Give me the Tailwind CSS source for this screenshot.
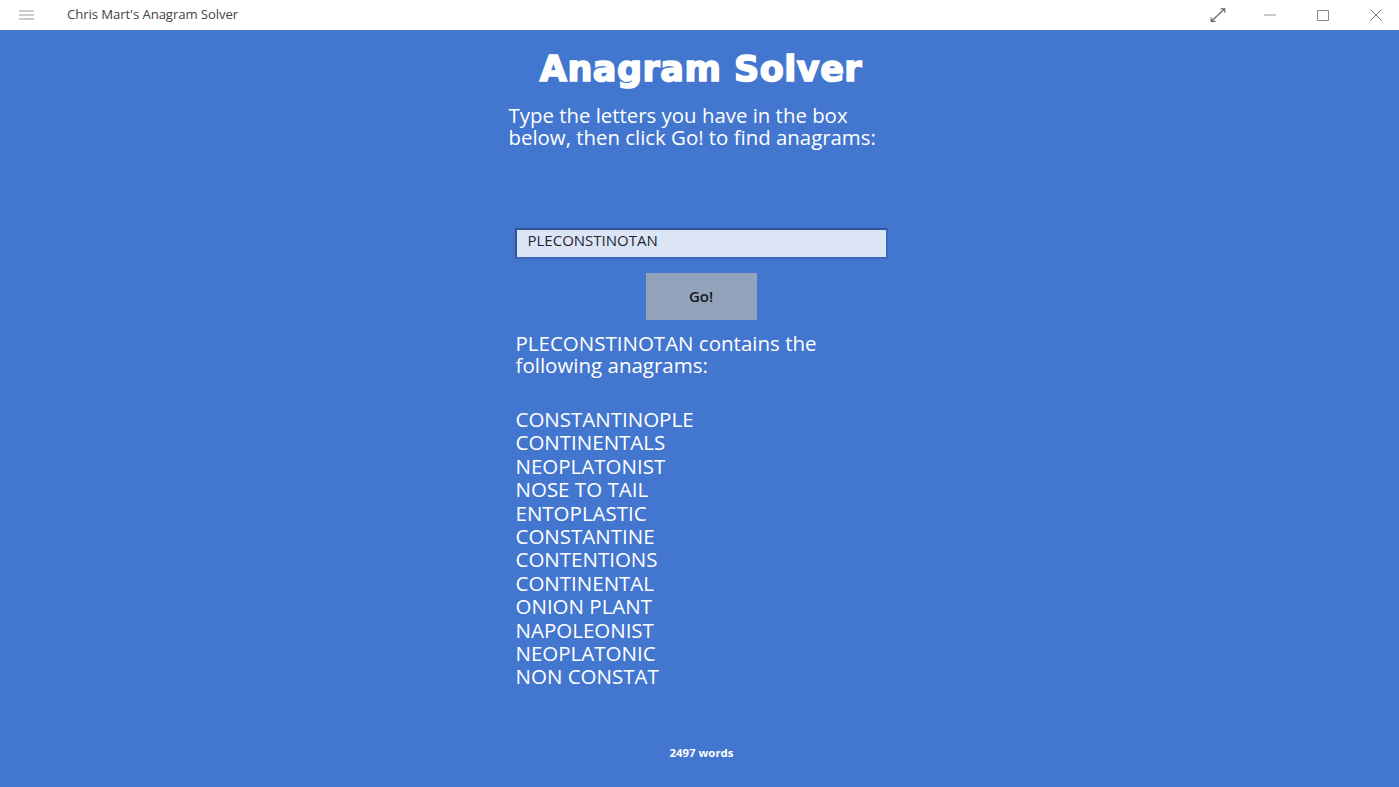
<!DOCTYPE html>
<html lang="en">
<head>
    <meta charset="UTF-8">
    <title>Chris Mart's Anagram Solver</title>
    <script src="https://cdn.jsdelivr.net/npm/@tailwindcss/browser@4"></script>
</head>
<body class="bg-[#4376cf] font-['Open_Sans',sans-serif] overflow-hidden">
    <div class="w-[1399px] h-[787px] flex flex-col">
        <!-- title bar -->
        <div class="h-[30px] bg-white flex items-center shrink-0 text-[#555]">
            <svg class="ml-[19px]" width="15" height="10" viewBox="0 0 15 10" fill="none" stroke="#999" stroke-width="1"><path d="M0 1h15M0 5h15M0 9h15"/></svg>
            <div class="ml-[33px] text-[13.200px] text-[#444] tracking-[-0.1px]">Chris Mart's Anagram Solver</div>
            <div class="ml-auto flex items-center">
                <svg width="16" height="14" viewBox="0 0 16 14" fill="none" stroke="#666" stroke-width="1.200"><path d="M1 13.500 15 .5M10.500 .8h4.300v4M1.200 9.500v3.800h4.300"/></svg>
                <svg class="ml-[38px]" width="12" height="2" viewBox="0 0 12 2" fill="none" stroke="#999" stroke-width="1"><path d="M0 1h12"/></svg>
                <svg class="ml-[41px]" width="12" height="11" viewBox="0 0 12 11" fill="none" stroke="#888" stroke-width="1"><path d="M.5 .5h11v10H.5z"/></svg>
                <svg class="ml-[41px] mr-[17px]" width="12" height="12" viewBox="0 0 12 12" fill="none" stroke="#777" stroke-width="1"><path d="M.5 .5l11 11M11.500 .5l-11 11"/></svg>
            </div>
        </div>

        <!-- content -->
        <div class="flex flex-col items-center text-white relative grow">
            <h1 class="mt-[14px] h-[50px] font-['DejaVu_Sans',sans-serif] font-bold text-[35px] leading-[50px] tracking-[0.5px] ml-[3px] [-webkit-text-stroke:1.6px_white]">Anagram Solver</h1>
            <p class="mt-[10px] w-[372px] ml-[-10px] text-[20.400px] leading-[22px]">Type the letters you have in the box below, then click Go! to find anagrams:</p>
            <div class="mt-[80px] ml-[3px] w-[373px] h-[31px] bg-[#dce5f5] border-2 border-[#2f5597] border-b-[#3a69b8] border-r-[#3a69b8] pl-[11px] text-[15px] leading-[20px] text-[#1f2533]">PLECONSTINOTAN</div>
            <button class="mt-[14px] ml-[3px] w-[111px] h-[47px] bg-[#93a3bc] text-[15px] font-semibold text-[#14171f]">Go!</button>
            <div class="mt-[12px] ml-[2px] w-[370px] text-[20.500px] leading-[22px]">
                <p class="w-[320px]">PLECONSTINOTAN contains the following anagrams:</p>
                <ul class="mt-[32px] leading-[23.4px]">
                    <li>CONSTANTINOPLE</li>
                    <li>CONTINENTALS</li>
                    <li>NEOPLATONIST</li>
                    <li>NOSE TO TAIL</li>
                    <li>ENTOPLASTIC</li>
                    <li>CONSTANTINE</li>
                    <li>CONTENTIONS</li>
                    <li>CONTINENTAL</li>
                    <li>ONION PLANT</li>
                    <li>NAPOLEONIST</li>
                    <li>NEOPLATONIC</li>
                    <li>NON CONSTAT</li>
                </ul>
            </div>
            <div class="absolute top-[714px] left-0 w-full text-center text-[11.400px] font-bold ml-[2px]">2497 words</div>
        </div>
    </div>
</body>
</html>
